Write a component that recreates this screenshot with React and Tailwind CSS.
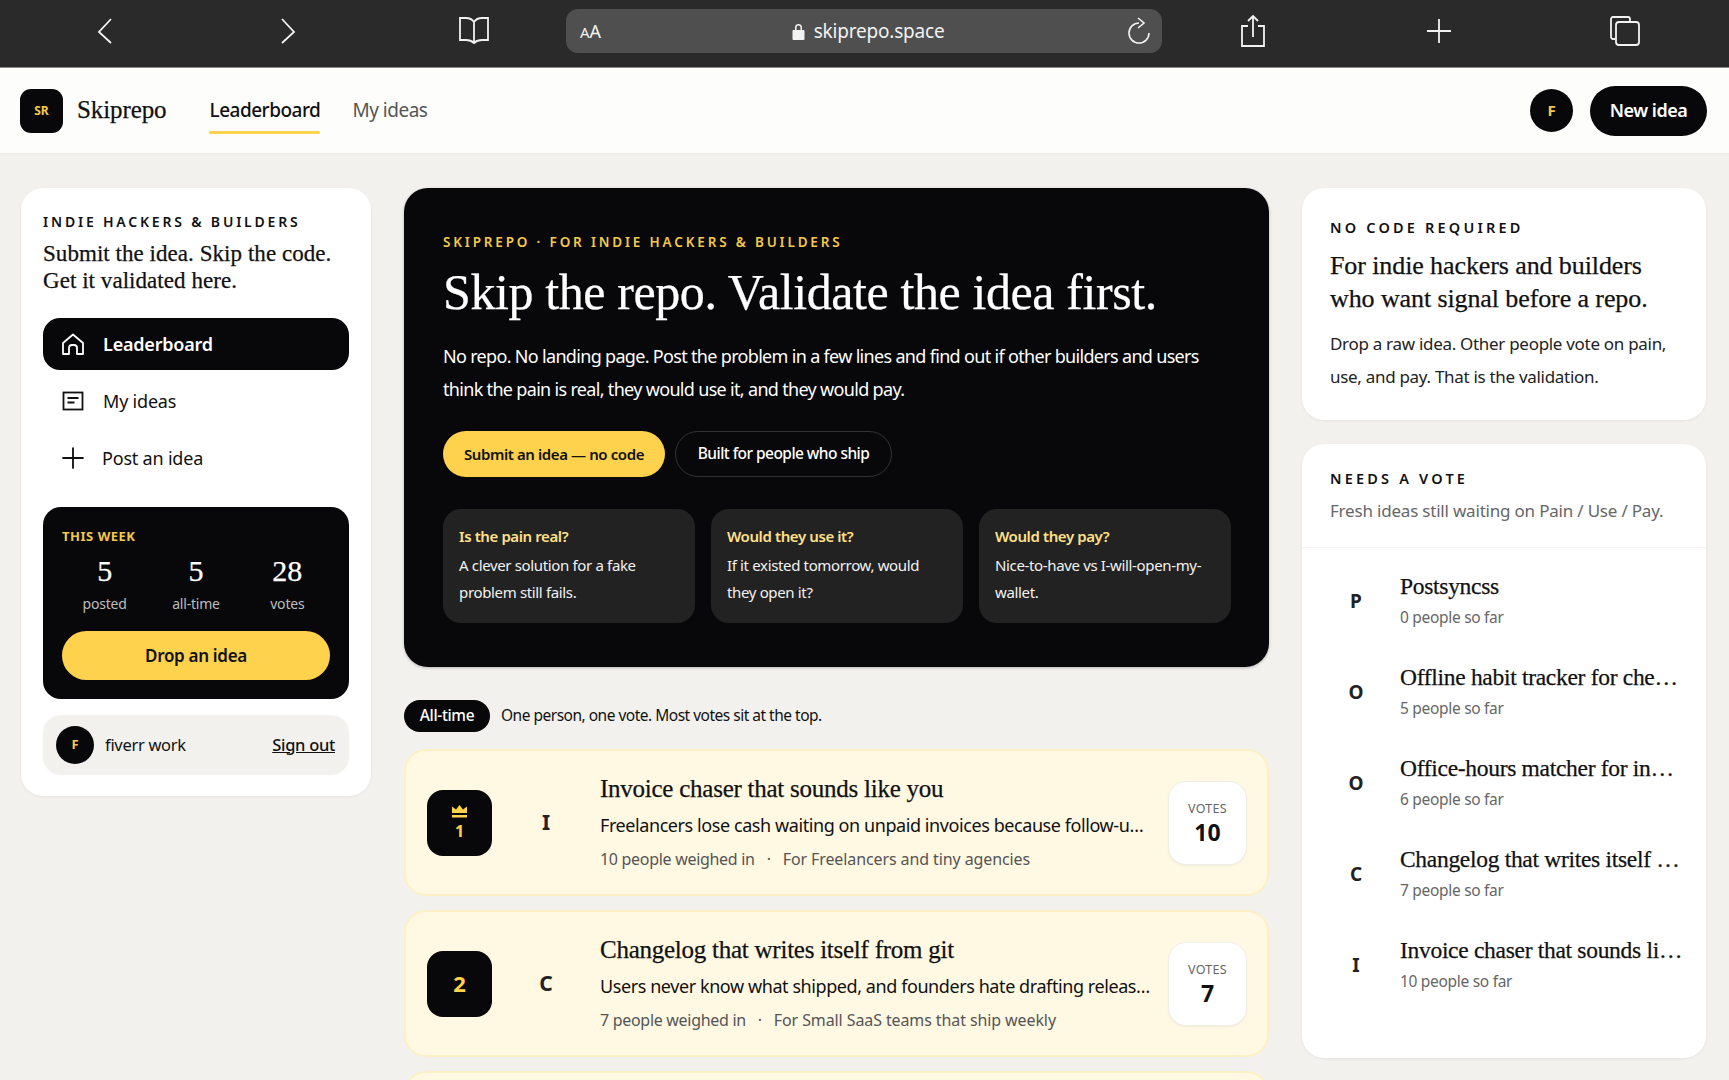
import { Plus } from 'lucide-react';

const serif = "font-['Liberation_Serif',serif] [-webkit-text-stroke:0.25px_currentColor]";

const checks = [
  { title: 'Is the pain real?', text: 'A clever solution for a fake problem still fails.' },
  { title: 'Would they use it?', text: 'If it existed tomorrow, would they open it?' },
  { title: 'Would they pay?', text: 'Nice-to-have vs I-will-open-my-wallet.' },
];

const ideas = [
  {
    rank: 1,
    letter: 'I',
    title: 'Invoice chaser that sounds like you',
    desc: 'Freelancers lose cash waiting on unpaid invoices because follow-ups feel awkward to write.',
    people: '10 people weighed in',
    audience: 'For Freelancers and tiny agencies',
    votes: 10,
  },
  {
    rank: 2,
    letter: 'C',
    title: 'Changelog that writes itself from git',
    desc: 'Users never know what shipped, and founders hate drafting release notes every single week.',
    people: '7 people weighed in',
    audience: 'For Small SaaS teams that ship weekly',
    votes: 7,
  },
  {
    rank: 3,
    letter: 'O',
    title: 'Office-hours matcher for indie founders',
    desc: 'Founders want quick feedback from people who have shipped before.',
    people: '6 people weighed in',
    audience: 'For Indie founders',
    votes: 6,
  },
];

const waiting = [
  { letter: 'P', title: 'Postsyncss', people: '0 people so far' },
  { letter: 'O', title: 'Offline habit tracker for checklists', people: '5 people so far' },
  { letter: 'O', title: 'Office-hours matcher for indie founders', people: '6 people so far' },
  { letter: 'C', title: 'Changelog that writes itself from git', people: '7 people so far' },
  { letter: 'I', title: 'Invoice chaser that sounds like you', people: '10 people so far' },
];

function BrowserBar() {
  return (
    <div className="flex h-[68px] shrink-0 items-center bg-[#2a2a2a] pb-[5px] text-[#f2f2f2] border-b border-[#8a8a8a]">
      <svg className="ml-[96px] shrink-0" width="18" height="28" viewBox="0 0 18 28" fill="none" stroke="currentColor" strokeWidth="1.8">
        <path d="M15 2 3 15l12 11" />
      </svg>
      <svg className="ml-[165px] shrink-0" width="18" height="28" viewBox="0 0 18 28" fill="none" stroke="currentColor" strokeWidth="1.8">
        <path d="m3 2 12 13L3 26" />
      </svg>
      <svg className="ml-[160px] shrink-0" width="34" height="30" viewBox="0 0 34 30" fill="none" stroke="currentColor" strokeWidth="1.8">
        <path d="M17 6c-2-3-5-4-8-4H3v22h6c4 0 6 1 8 3 2-2 4-3 8-3h6V2h-6c-3 0-6 1-8 4Zm0 0v21" />
      </svg>
      <div className="ml-[75px] flex h-[44px] w-[596px] shrink-0 items-center rounded-[12px] bg-[#4f4f4f] pl-[14px] pr-[10px]">
        <span className="text-[18px] leading-none"><span className="text-[15px]">A</span>A</span>
        <div className="flex flex-1 items-center justify-center gap-[9px] pl-[9px] text-[19px]">
          <svg width="13" height="17" viewBox="0 0 13 17" fill="currentColor">
            <path d="M3 7V4.500a3.500 3.500 0 0 1 7 0V7h1.500a1 1 0 0 1 1 1v8a1 1 0 0 1-1 1h-10a1 1 0 0 1-1-1V8a1 1 0 0 1 1-1H3Zm1.500 0h4V4.500a2 2 0 0 0-4 0V7Z" />
          </svg>
          <span className="tracking-[-0.2px]">skiprepo.space</span>
        </div>
        <svg width="26" height="28" viewBox="0 0 26 28" fill="none" stroke="currentColor" strokeWidth="1.6">
          <path d="M13 6a10 10 0 1 0 10 10" />
          <path d="m12 1 6 5-6 5" />
        </svg>
      </div>
      <svg className="ml-[77px] shrink-0" width="28" height="34" viewBox="0 0 28 34" fill="none" stroke="currentColor" strokeWidth="1.8">
        <path d="M9 12H3v20h22V12h-6M14 23V2M9 7l5-5 5 5" />
      </svg>
      <svg className="ml-[158px] shrink-0" width="28" height="28" viewBox="0 0 28 28" fill="none" stroke="currentColor" strokeWidth="1.8">
        <path d="M14 2v24M2 14h24" />
      </svg>
      <svg className="ml-[156px] shrink-0" width="32" height="32" viewBox="0 0 32 32" fill="none" stroke="currentColor" strokeWidth="1.8">
        <path d="M6 24H4a2 2 0 0 1-2-2V4a2 2 0 0 1 2-2h15a2 2 0 0 1 2 2v3" />
        <rect x="7" y="7" width="23" height="23" rx="3" />
      </svg>
    </div>
  );
}

function TopNav() {
  return (
    <div className="flex h-[86px] shrink-0 items-center bg-[#fdfdfb] border-b border-[#ecebe6] pl-[20px] pr-[22px]">
      <div className="flex h-[44px] w-[43px] items-center justify-center rounded-[11px] bg-[#08080a] text-[12px] font-bold text-[#f2c94c]">SR</div>
      <span className={`${serif} ml-[14px] mt-[-2px] text-[25px] tracking-[-0.1px] text-[#111]`}>Skiprepo</span>
      <div className="ml-[43px] flex h-full flex-col justify-end">
        <span className="pb-[7px] text-[19px] font-medium leading-[28px] tracking-[-0.5px] text-[#111]">Leaderboard</span>
        <div className="mb-[19px] h-[3px] w-[111px] rounded-full bg-[#ffd24d]" />
      </div>
      <span className="ml-[32px] text-[19px] tracking-[-0.5px] text-[#555]">My ideas</span>
      <div className="ml-auto flex h-[43px] w-[43px] items-center justify-center rounded-full bg-[#08080a] text-[15px] font-bold text-[#f2c94c]">F</div>
      <button className="ml-[17px] h-[50px] w-[117px] rounded-full bg-[#08080a] text-[18px] font-semibold tracking-[-0.5px] text-white">New idea</button>
    </div>
  );
}

function HomeIcon() {
  return (
    <svg width="24" height="24" viewBox="0 0 24 24" fill="none" stroke="currentColor" strokeWidth="1.8" strokeLinejoin="round">
      <path d="M2 11 12 2.500 22 11v11h-6v-6a3 3 0 0 0-3-3h-2a3 3 0 0 0-3 3v6H2V11Z" />
    </svg>
  );
}

function IdeasIcon() {
  return (
    <svg width="22" height="20" viewBox="0 0 22 20" fill="none" stroke="currentColor" strokeWidth="1.8">
      <rect x="1.500" y="1.500" width="19" height="17" />
      <path d="M5.500 7h11M5.500 11.500h7" />
    </svg>
  );
}

function LeftSidebar() {
  return (
    <aside className="w-[350px] shrink-0 self-start rounded-[22px] bg-white px-[22px] pt-[24px] pb-[21px] shadow-[0_1px_3px_rgba(0,0,0,0.06)]">
      <p className="text-[14px] font-semibold leading-[20px] tracking-[0.2em] text-[#111]">INDIE HACKERS &amp; BUILDERS</p>
      <p className={`${serif} mt-[8px] text-[23px] leading-[27px] tracking-[0.05px] text-[#111]`}>
        Submit the idea. Skip the code.
        <br />
        Get it validated here.
      </p>
      <nav className="mt-[24px] flex flex-col gap-[5px] text-[18px] tracking-[-0.2px] text-[#111]">
        <div className="flex h-[52px] items-center gap-[18px] rounded-[17px] bg-[#08080a] pl-[18px] font-semibold text-white">
          <HomeIcon />
          Leaderboard
        </div>
        <div className="flex h-[52px] items-center gap-[19px] pl-[19px]">
          <IdeasIcon />
          My ideas
        </div>
        <div className="flex h-[52px] items-center gap-[12px] pl-[13px]">
          <Plus size={34} strokeWidth={1.3} />
          Post an idea
        </div>
      </nav>
      <div className="mt-[23px] rounded-[18px] bg-[#08080a] px-[19px] pt-[20px] pb-[19px]">
        <p className="text-[13px] font-bold leading-[18px] tracking-[0.04em] text-[#f2c94c]">THIS WEEK</p>
        <div className="mt-[8px] -mx-[3px] grid grid-cols-3">
          {[['5', 'posted'], ['5', 'all-time'], ['28', 'votes']].map(([n, label]) => (
            <div key={label} className="flex flex-col items-center">
              <span className={`${serif} text-[30px] leading-[36px] text-white`}>{n}</span>
              <span className="mt-[5px] text-[14px] leading-[20px] tracking-[-0.2px] text-[#bdbdbd]">{label}</span>
            </div>
          ))}
        </div>
        <button className="mt-[17px] h-[49px] w-full rounded-full bg-[#ffd24d] text-[17px] font-semibold tracking-[-0.3px] text-[#111]">Drop an idea</button>
      </div>
      <div className="mt-[16px] flex h-[60px] items-center rounded-[18px] bg-[#f2f1ed] pl-[13px] pr-[14px] text-[16.500px] tracking-[-0.3px] text-[#111]">
        <div className="flex h-[38px] w-[38px] items-center justify-center rounded-full bg-[#08080a] text-[13px] font-bold text-[#f2c94c]">F</div>
        <span className="ml-[11px]">fiverr work</span>
        <span className="ml-auto font-medium underline">Sign out</span>
      </div>
    </aside>
  );
}

function Hero() {
  return (
    <section className="h-[479px] rounded-[24px] bg-[#08080a] px-[39px] pt-[44px] shadow-[0_1px_3px_rgba(0,0,0,0.25)]">
      <p className="text-[13.500px] font-semibold leading-[20px] tracking-[0.21em] text-[#f2c94c]">SKIPREPO · FOR INDIE HACKERS &amp; BUILDERS</p>
      <h1 className={`${serif} mt-[10px] text-[50px] leading-[60px] tracking-[-0.4px] text-white`}>Skip the repo. Validate the idea first.</h1>
      <p className="mt-[18px] w-[790px] text-[18px] leading-[33px] tracking-[-0.68px] text-white">
        No repo. No landing page. Post the problem in a few lines and find out if other builders and users think the pain is real, they would use it, and they would pay.
      </p>
      <div className="mt-[25px] flex gap-[10px]">
        <button className="h-[46px] w-[222px] rounded-full bg-[#ffd24d] text-[15px] font-semibold tracking-[-0.4px] text-[#111]">Submit an idea — no code</button>
        <button className="h-[46px] w-[217px] rounded-full border border-[#333] text-[15.500px] font-medium tracking-[-0.55px] text-white">Built for people who ship</button>
      </div>
      <div className="mt-[32px] grid w-[788px] grid-cols-3 gap-[16px]">
        {checks.map((c) => (
          <div key={c.title} className="h-[114px] rounded-[18px] bg-[#222222] px-[16px] pt-[16px]">
            <p className="text-[15px] font-semibold leading-[22px] tracking-[-0.4px] text-[#ffe08a]">{c.title}</p>
            <p className="mt-[5px] text-[15px] leading-[27px] tracking-[-0.35px] text-[#f2f2f2]">{c.text}</p>
          </div>
        ))}
      </div>
    </section>
  );
}

function RankBadge({ rank }) {
  return (
    <div className="flex h-[66px] w-[65px] shrink-0 flex-col items-center justify-center rounded-[16px] bg-[#08080a] font-bold text-[#ffd24d]">
      {rank === 1 ? (
        <>
          <svg width="15" height="13" viewBox="0 0 15 13" fill="#ffd24d">
            <path d="M0 1.500 4 4.500 7.500 0 11 4.500 15 1.500V8H0V1.500ZM0 10h15v2.500H0z" />
          </svg>
          <span className="mt-[3px] text-[16px] leading-[20px]">1</span>
        </>
      ) : (
        <span className="text-[22px]">{rank}</span>
      )}
    </div>
  );
}

function IdeaCard({ idea }) {
  return (
    <article className="flex h-[147px] shrink-0 items-center rounded-[22px] border-2 border-[#fdf0c4] bg-[#fff8e3] pl-[21px] pr-[20px]">
      <RankBadge rank={idea.rank} />
      <span className="flex w-[108px] shrink-0 justify-center text-[21px] font-bold text-[#222]">{idea.letter}</span>
      <div className="min-w-0 flex-1">
        <h3 className={`${serif} text-[25px] leading-[30px] tracking-[-0.25px] text-[#111]`}>{idea.title}</h3>
        <p className="mt-[8px] w-[551px] truncate text-[18px] leading-[26px] tracking-[-0.42px] text-[#111]">{idea.desc}</p>
        <p className="mt-[9px] text-[16px] leading-[24px] tracking-[-0.3px] text-[#555]">
          {idea.people}
          <span className="mx-[12px]">·</span>
          <span className="tracking-[-0.1px]">{idea.audience}</span>
        </p>
      </div>
      <div className="flex h-[84px] w-[79px] shrink-0 flex-col items-center justify-center rounded-[18px] border border-[#f0eee6] bg-white pt-[2px] shadow-[0_1px_2px_rgba(0,0,0,0.05)]">
        <span className="text-[12.500px] leading-[16px] tracking-[0.02em] text-[#666]">VOTES</span>
        <span className="text-[23px] font-bold leading-[30px] text-[#111]">{idea.votes}</span>
      </div>
    </article>
  );
}

function RightSidebar() {
  return (
    <aside className="flex w-[404px] shrink-0 flex-col gap-[24px]">
      <section className="h-[232px] rounded-[22px] bg-white px-[28px] pt-[28px] shadow-[0_1px_3px_rgba(0,0,0,0.06)]">
        <p className="text-[14.500px] font-semibold leading-[22px] tracking-[0.22em] text-[#111]">NO CODE REQUIRED</p>
        <h2 className={`${serif} mt-[11px] text-[26px] leading-[33px] tracking-[-0.1px] text-[#111]`}>
          For indie hackers and builders
          <br />
          who want signal before a repo.
        </h2>
        <p className="mt-[12px] text-[17px] leading-[33px] tracking-[-0.3px] text-[#222]">
          Drop a raw idea. Other people vote on pain, use, and pay. That is the validation.
        </p>
      </section>
      <section className="h-[614px] rounded-[22px] bg-white shadow-[0_1px_3px_rgba(0,0,0,0.06)]">
        <div className="h-[104px] border-b border-[#f5f4f0] px-[28px] pt-[23px]">
          <p className="text-[14.500px] font-semibold leading-[22px] tracking-[0.22em] text-[#111]">NEEDS A VOTE</p>
          <p className="mt-[10px] text-[17px] leading-[24px] tracking-[-0.2px] text-[#666]">Fresh ideas still waiting on Pain / Use / Pay.</p>
        </div>
        <ul className="pt-[5px]">
          {waiting.map((w) => (
            <li key={w.title} className="flex h-[91px] items-center">
              <span className="mt-[5px] flex w-[98px] shrink-0 justify-center pl-[10px] text-[19px] font-bold text-[#222]">{w.letter}</span>
              <div className="w-[283px] min-w-0">
                <p className={`${serif} truncate text-[23.500px] leading-[32px] tracking-[-0.3px] text-[#111]`}>{w.title}</p>
                <p className="mt-[4px] text-[15.500px] leading-[22px] tracking-[-0.3px] text-[#666]">{w.people}</p>
              </div>
            </li>
          ))}
        </ul>
      </section>
    </aside>
  );
}

export default function App() {
  return (
    <div className="flex h-[1080px] flex-col overflow-hidden bg-[#f2f1ed] font-['Noto_Sans',sans-serif]">
      <BrowserBar />
      <TopNav />
      <main className="flex items-start gap-[33px] pl-[21px] pt-[34px]">
        <LeftSidebar />
        <div className="w-[865px] shrink-0">
          <Hero />
          <div className="mt-[33px] flex items-center gap-[11px]">
            <span className="flex h-[32px] w-[86px] items-center justify-center rounded-full bg-[#08080a] text-[15.500px] font-medium tracking-[-0.35px] text-white">All-time</span>
            <span className="text-[15.500px] tracking-[-0.5px] text-[#111]">One person, one vote. Most votes sit at the top.</span>
          </div>
          <div className="mt-[17px] flex flex-col gap-[14px]">
            {ideas.map((idea) => (
              <IdeaCard key={idea.rank} idea={idea} />
            ))}
          </div>
        </div>
        <RightSidebar />
      </main>
    </div>
  );
}
